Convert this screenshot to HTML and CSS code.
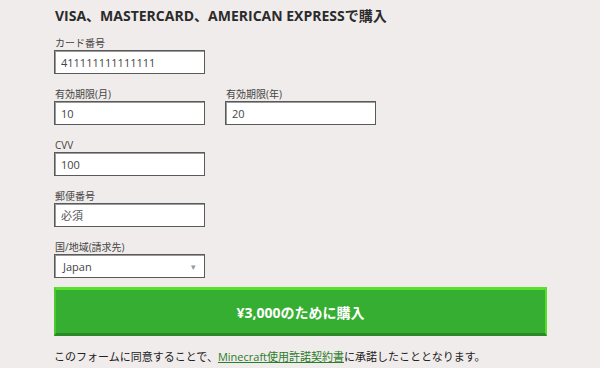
FILE: index.html
```html
<!DOCTYPE html>
<html lang="ja">
<head>
    <meta charset="UTF-8">
    <meta name="viewport" content="width=device-width, initial-scale=1.0">
    <title>購入</title>
    <link rel="stylesheet" href="styles.css">
</head>
<body>
    <div class="container">
        <h2>VISA、MASTERCARD、AMERICAN EXPRESSで購入</h2>
        <form id="paymentForm">
            <div class="form-group">
                <label for="card">カード番号</label>
                <input type="text" id="card" value="411111111111111">
            </div>
            <div class="form-row">
                <div class="form-group">
                    <label for="month">有効期限(月)</label>
                    <input type="text" id="month" value="10">
                </div>
                <div class="form-group">
                    <label for="year">有効期限(年)</label>
                    <input type="text" id="year" value="20">
                </div>
            </div>
            <div class="form-group">
                <label for="cvv">CVV</label>
                <input type="text" id="cvv" value="100">
            </div>
            <div class="form-group">
                <label for="zip">郵便番号</label>
                <input type="text" id="zip" placeholder="必須">
            </div>
            <div class="form-group">
                <label for="country">国/地域(請求先)</label>
                <div class="select-box">
                    <span>Japan</span>
                    <span class="caret">▾</span>
                </div>
            </div>
            <button type="submit" class="buy-button">¥3,000のために購入</button>
        </form>
        <p class="terms">このフォームに同意することで、<a href="#">Minecraft使用許諾契約書</a>に承諾したこととなります。</p>
    </div>
</body>
</html>
```

FILE: styles.css
```css
body {
    font-family: "Open Sans", "Noto Sans CJK JP", sans-serif;
    margin: 0;
    padding: 0;
    background-color: #f0eceb;
    color: #333;
}
.container {
    padding: 6px 0 0 54px;
    width: 493px;
}
h2 {
    font-size: 14px;
    line-height: 20px;
    font-weight: bold;
    color: #2b2b2b;
    margin: 0 0 10px 1px;
}
.form-group {
    margin-bottom: 13px;
}
.form-row {
    display: grid;
    grid-template-columns: 151px 151px;
    column-gap: 20px;
}
label {
    display: block;
    font-size: 10px;
    line-height: 14px;
    color: #444;
    margin-left: 1px;
}
input[type="text"], .select-box {
    display: block;
    width: 151px;
    height: 24px;
    box-sizing: border-box;
    border: 1px solid #5a5a5a;
    box-shadow: inset 1px 1px 0 #9a9a9a;
    background-color: #fff;
    font-family: "Open Sans", "Noto Sans CJK JP", sans-serif;
    font-size: 11px;
    color: #444;
    padding: 0 6px;
    outline: none;
}
input::placeholder {
    color: #555;
}
.select-box {
    display: flex;
    align-items: center;
    justify-content: space-between;
    padding: 0 8px 0 8px;
    margin-bottom: -4px;
}
.caret {
    font-size: 9px;
    color: #999;
}
.buy-button {
    display: block;
    width: 493px;
    height: 49px;
    background-color: #36ae31;
    border: none;
    border-top: 3px solid #57e02d;
    border-left: 2px solid #4cc82c;
    border-right: 2px solid #54dd2a;
    border-bottom: 3px solid #2b8a26;
    color: #fff;
    font-family: "Open Sans", "Noto Sans CJK JP", sans-serif;
    font-size: 14px;
    font-weight: bold;
    cursor: pointer;
}
.terms {
    font-size: 11px;
    line-height: 18px;
    margin: 12px 0 0 0;
    color: #222;
}
.terms a {
    color: #2a7d2a;
}
```
